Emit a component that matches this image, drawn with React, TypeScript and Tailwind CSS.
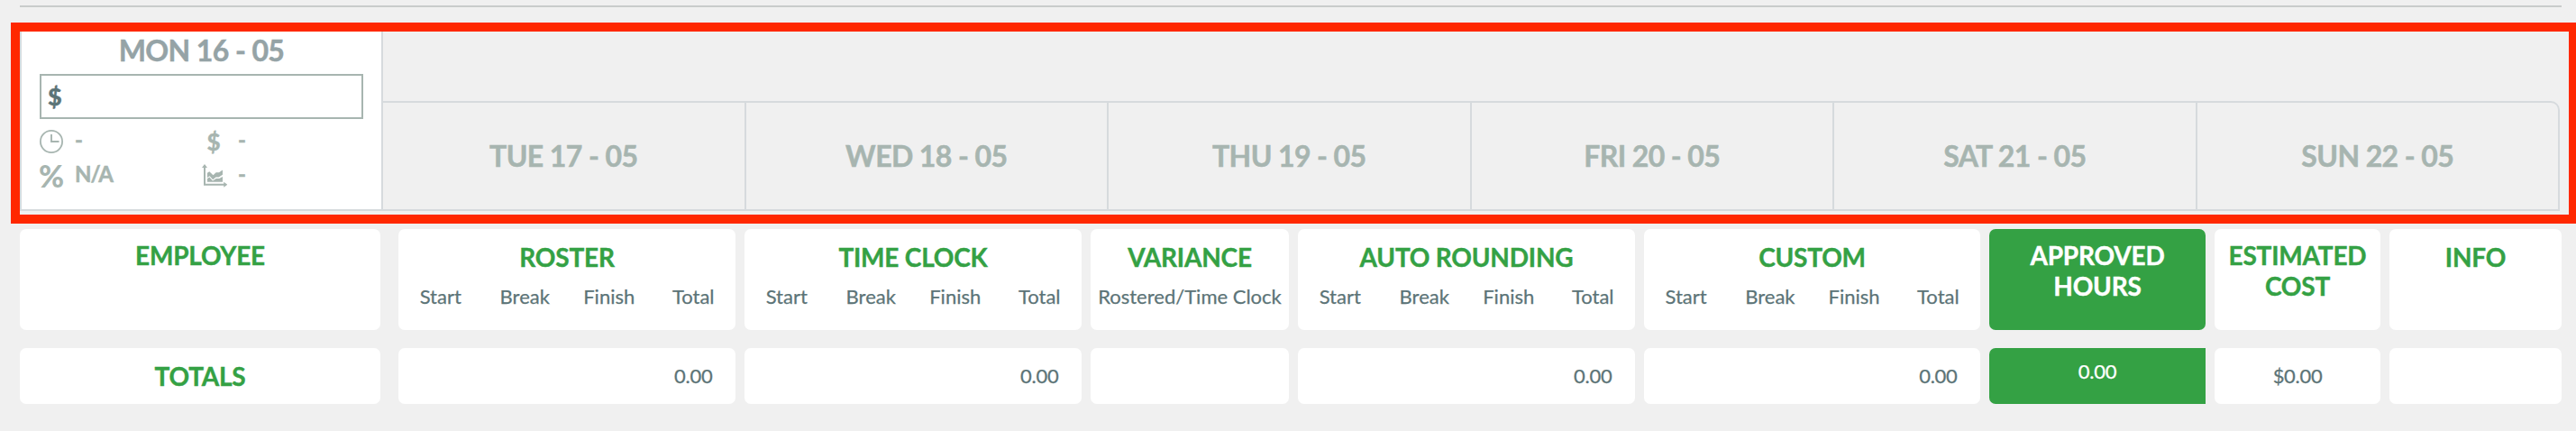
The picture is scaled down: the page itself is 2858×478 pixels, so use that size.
import type { ReactNode } from "react";
import { twMerge } from "tailwind-merge";

const days = [
  "TUE 17 - 05",
  "WED 18 - 05",
  "THU 19 - 05",
  "FRI 20 - 05",
  "SAT 21 - 05",
  "SUN 22 - 05",
];

type Column = {
  title: string;
  className: string;
  subs?: string[];
  total?: string;
  highlight?: boolean;
};

const shift = ["Start", "Break", "Finish", "Total"];

const columns: Column[] = [
  { title: "EMPLOYEE", className: "w-[400px] mr-5" },
  { title: "ROSTER", className: "w-[374px] mr-2.5", subs: shift, total: "0.00" },
  { title: "TIME CLOCK", className: "w-[374px] mr-2.5", subs: shift, total: "0.00" },
  { title: "VARIANCE", className: "w-[220px] mr-2.5", subs: ["Rostered/Time Clock"] },
  { title: "AUTO ROUNDING", className: "w-[374px] mr-2.5", subs: shift, total: "0.00" },
  { title: "CUSTOM", className: "w-[373px] mr-2.5", subs: shift, total: "0.00" },
  { title: "APPROVED HOURS", className: "w-[240px] mr-2.5", total: "0.00", highlight: true },
  { title: "ESTIMATED COST", className: "w-[184px] mr-2.5", total: "$0.00" },
  { title: "INFO", className: "w-[191px]" },
];

const ClockIcon = () => (
  <svg width="26" height="26" viewBox="0 0 26 26" fill="none" stroke="currentColor">
    <circle cx="13" cy="13" r="12.1" strokeWidth="1.8" />
    <path d="M13 5v8h8.5" strokeWidth="1.9" />
  </svg>
);

const ChartIcon = () => (
  <svg width="28" height="26" viewBox="0 0 28 26" fill="currentColor">
    <path d="M2 3.5h2v18.3h21v2H2z" />
    <path d="M3 0l3 4H0zM28.3 22.8l-4 3v-6z" />
    <path d="M6 9.8l2.3-1.6 4.2 4 3.2-3h3.3l4-2.6v5.2l-4.3 2.6h-3.2l-3.3 2.8-3.6-4L6 15z" />
    <path d="M6 15.9l2.4-1.4 3.6 4.1 3.8-2.7h3.4l3.8-1.8v5.7H6z" />
  </svg>
);

const Stat = ({ icon, children }: { icon: ReactNode; children: ReactNode }) => (
  <div className="flex h-[38px] items-center">
    <div className="flex w-7 justify-center leading-none font-black">{icon}</div>
    <div className="ml-3 pb-1 text-2xl leading-7 font-bold tracking-[-1px] [-webkit-text-stroke:0.5px]">
      {children}
    </div>
  </div>
);

const Card = ({
  className,
  children,
}: {
  className?: string;
  children?: ReactNode;
}) => (
  <div className={twMerge("shrink-0 rounded-[7px] bg-white text-center", className)}>
    {children}
  </div>
);

const heading =
  "text-[28px] leading-[34px] font-bold tracking-[-0.2px] text-[#34a144] [-webkit-text-stroke:0.4px]";
const dayLabel = "text-[32px] font-bold tracking-[-0.6px] [-webkit-text-stroke:0.5px]";

export default function App() {
  return (
    <div className="h-[478px] w-[2858px] overflow-hidden bg-[#f0f0f0] pt-1.5 font-[Lato,sans-serif] text-[#5c7477]">
      <div className="mr-4 ml-[22px] h-0.5 bg-[#c9cccb]" />

      <div className="mt-[17px] ml-3 h-[223px] border-10 border-r-8 border-[#ff2800]">
        <div className="flex h-[199px] w-[2818px]">
          <div className="w-[403px] border-x-2 border-b-2 border-[#d6dadd] bg-white px-5">
            <div className={twMerge(dayLabel, "h-[41px] text-center leading-[41px] text-[#95a3a6]")}>
              MON 16 - 05
            </div>
            <div className="mt-1.5 flex h-[50px] w-[359px] items-center border-2 border-[#a7b5b0] pb-px pl-[7px] text-[27px] leading-none font-black [-webkit-text-stroke:0.4px]">
              $
            </div>
            <div className="mt-1.5 grid grid-cols-[180px_1fr] text-[#a7b5b0]">
              <div className="-ml-px">
                <Stat icon={<ClockIcon />}>-</Stat>
              </div>
              <Stat icon={<span className="mr-0.5 text-[26px] [-webkit-text-stroke:0.3px]">$</span>}>-</Stat>
              <div className="-ml-px">
                <Stat icon={<span className="text-[34px]">%</span>}>N/A</Stat>
              </div>
              <Stat icon={<ChartIcon />}>-</Stat>
            </div>
          </div>

          <div className="flex flex-1 flex-col justify-end">
            <div className="flex h-[122px] rounded-tr-[10px] border-y-2 border-r-2 border-[#d6dadd]">
              {days.map((day) => (
                <div
                  key={day}
                  className={twMerge(
                    dayLabel,
                    "flex flex-1 items-center justify-center border-r-2 border-[#d6dadd] text-[#a7b5b0] last:border-r-0"
                  )}
                >
                  {day}
                </div>
              ))}
            </div>
          </div>
        </div>
      </div>

      <div className="mt-1.5 ml-[22px] flex">
        {columns.map((col) => (
          <Card
            key={col.title}
            className={twMerge(
              "h-28 pt-3",
              (col.subs || col.title === "INFO") && "pt-3.5",
              col.highlight && "bg-[#34a144]",
              col.className
            )}
          >
            <div
              className={twMerge(
                heading,
                "px-3",
                col.subs && "px-0",
                col.highlight && "px-10 text-white"
              )}
            >
              {col.title}
            </div>
            {col.subs && (
              <div className="mt-[13px] flex text-[22px] leading-7 [-webkit-text-stroke:0.25px]">
                {col.subs.map((sub) => (
                  <div key={sub} className="flex-1 whitespace-nowrap">
                    {sub}
                  </div>
                ))}
              </div>
            )}
          </Card>
        ))}
      </div>

      <div className="mt-5 ml-[22px] flex">
        {columns.map((col, index) => (
          <Card
            key={col.title}
            className={twMerge(
              "flex h-[62px] items-center justify-center text-[22px] leading-7",
              col.subs && "justify-end",
              col.highlight && "rounded-r-none bg-[#34a144] pb-[11px] text-white",
              col.className
            )}
          >
            {index === 0 && <div className={heading}>TOTALS</div>}
            {col.total && (
              <div
                className={twMerge(
                  "tracking-[-0.3px] [-webkit-text-stroke:0.25px]",
                  col.subs && "w-1/4"
                )}
              >
                {col.total}
              </div>
            )}
          </Card>
        ))}
      </div>
    </div>
  );
}
